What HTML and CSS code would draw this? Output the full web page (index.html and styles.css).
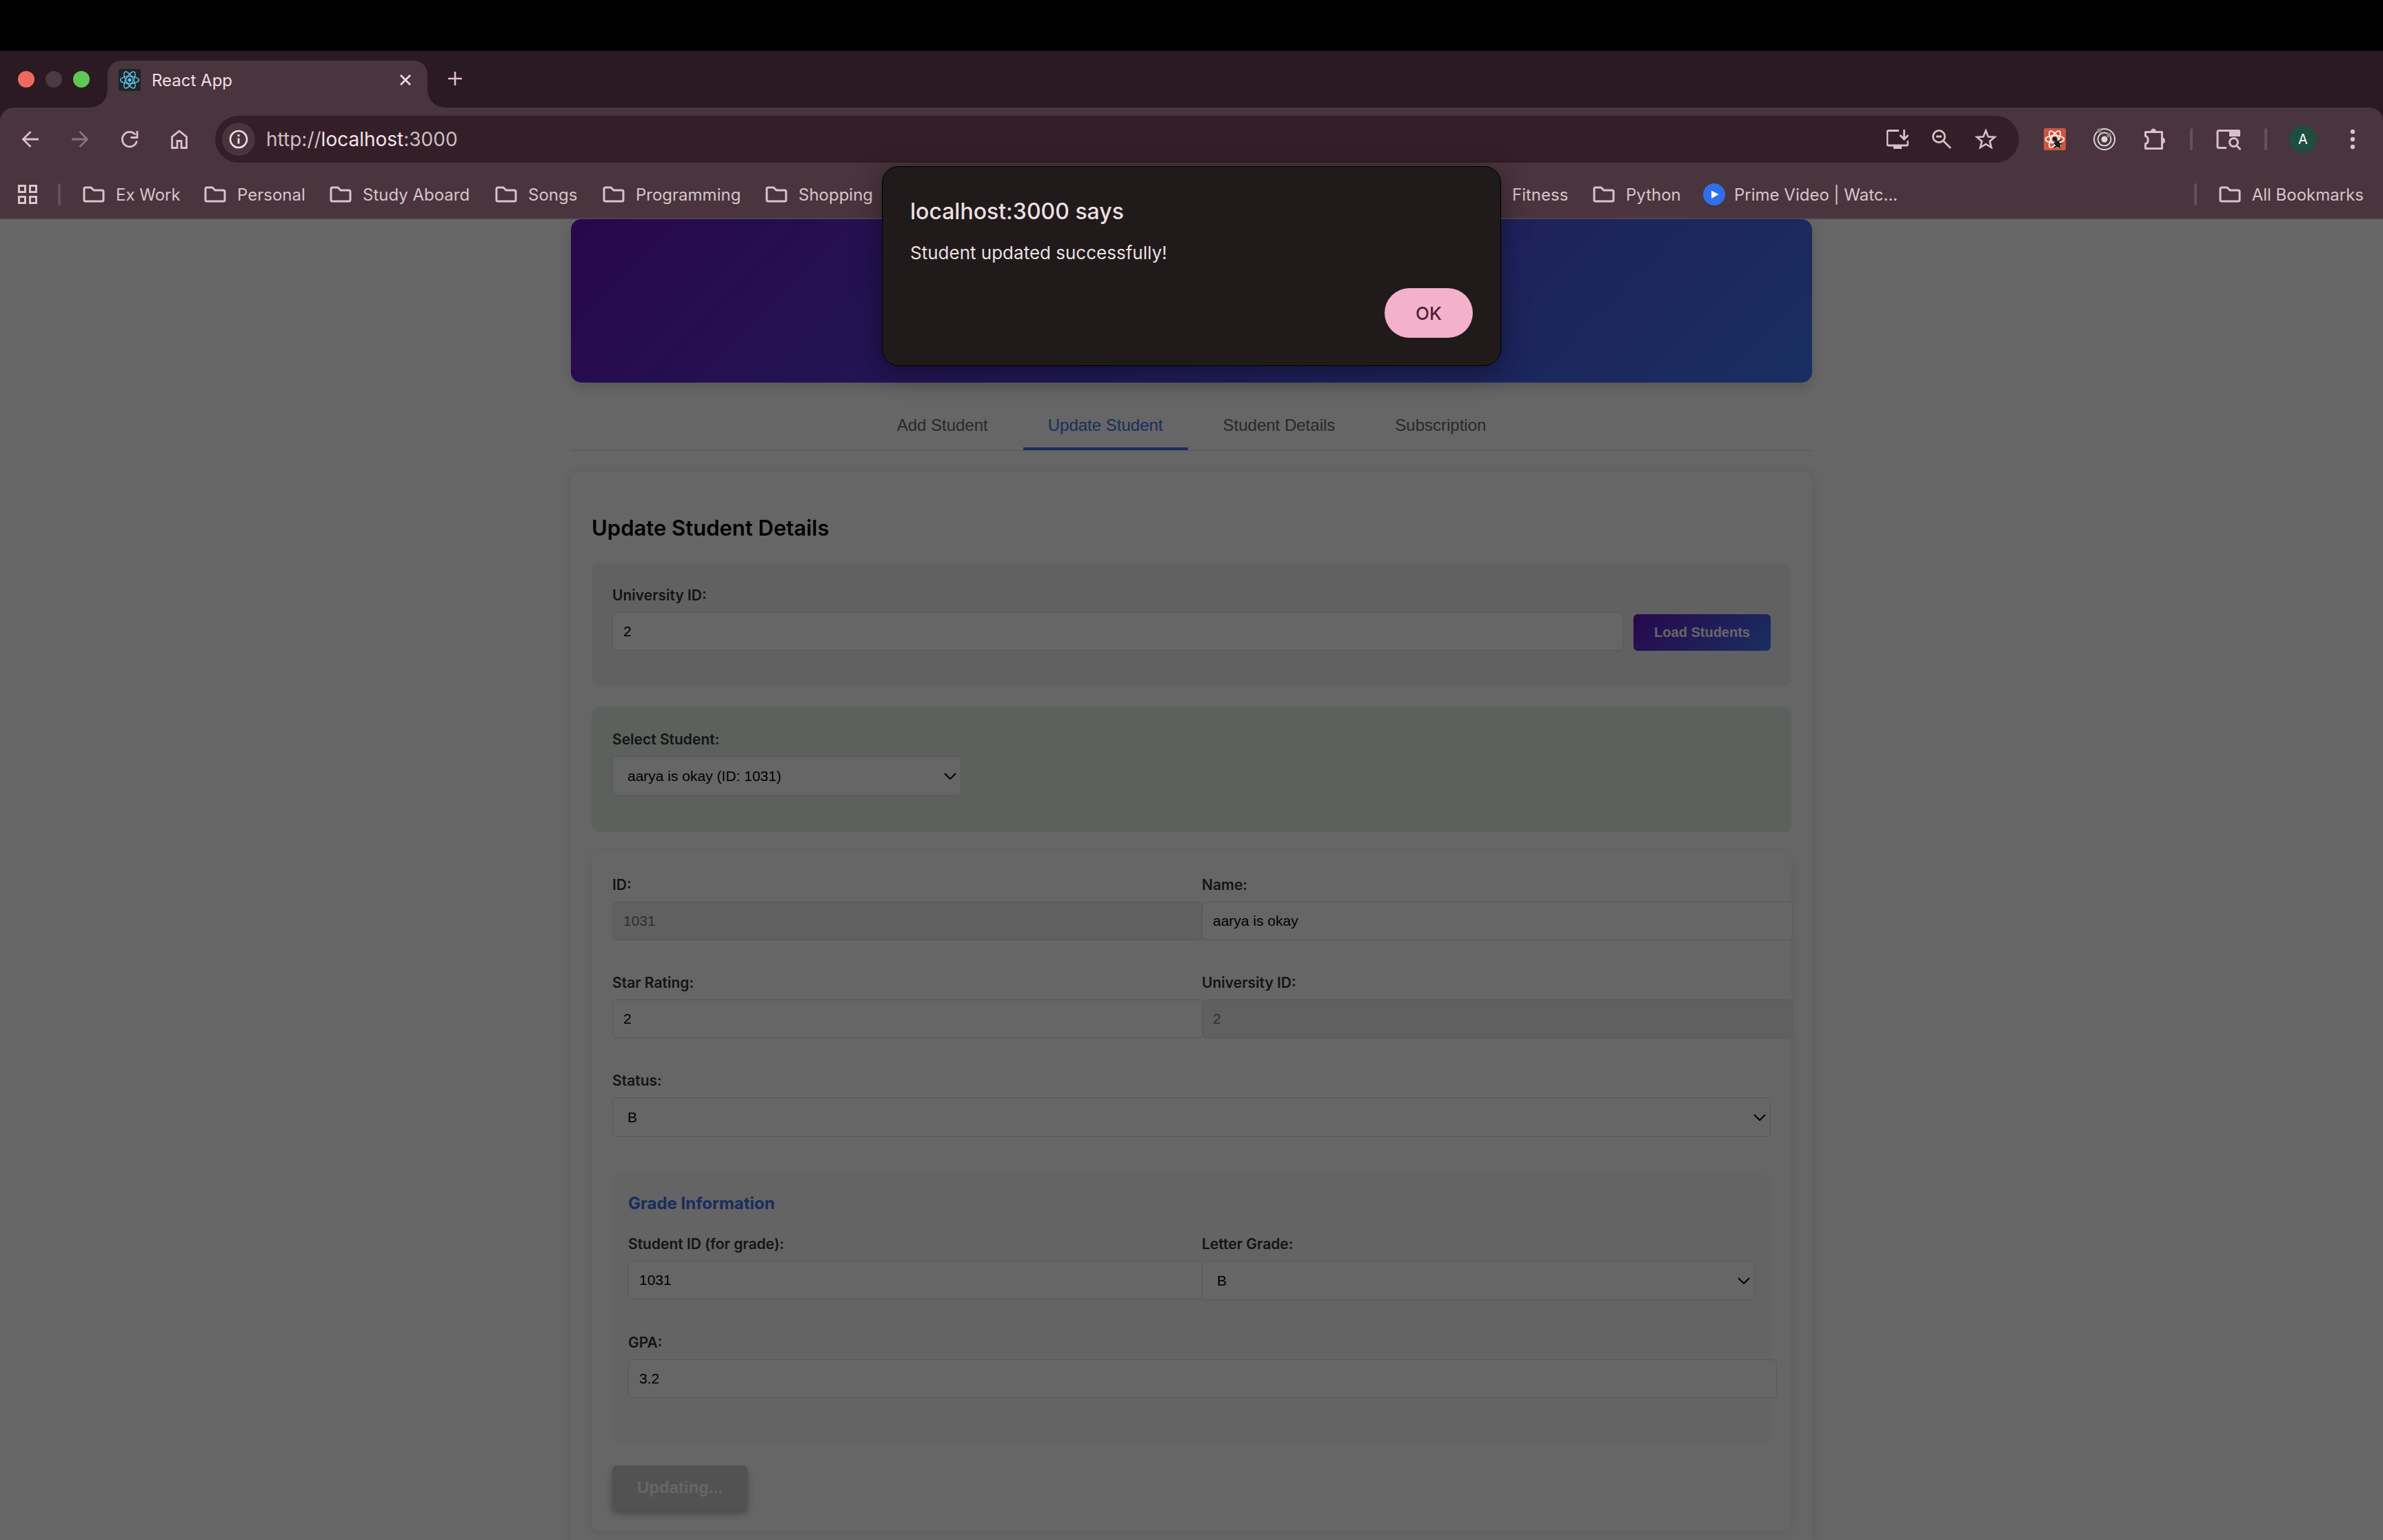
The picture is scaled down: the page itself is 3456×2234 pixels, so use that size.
FILE: index.html
```html
<!DOCTYPE html>
<html lang="en">
<head>
<meta charset="utf-8">
<title>React App</title>
<link rel="stylesheet" href="styles.css">
</head>
<body>
<svg class="defs" aria-hidden="true">
  <symbol id="folder" viewBox="0 0 32 24"><path d="M2 4a2 2 0 0 1 2-2h8l4 4h12a2 2 0 0 1 2 2v12a2 2 0 0 1-2 2H4a2 2 0 0 1-2-2z" fill="none" stroke="currentColor" stroke-width="3"/></symbol>
  <symbol id="chevron" viewBox="0 0 18 10"><path d="M1 1l8 8 8-8" fill="none" stroke="currentColor" stroke-width="2"/></symbol>
</svg>

<header class="chrome">
  <div class="menubar"></div>
  <div class="tabstrip">
    <div class="lights"><i class="light red"></i><i class="light off"></i><i class="light go"></i></div>
    <div class="tab">
      <svg class="favicon" viewBox="0 0 32 32"><rect width="32" height="32" rx="3" fill="#20232a"/><g fill="none" stroke="#61c4e8" stroke-width="1.4"><ellipse cx="16" cy="16" rx="13.500" ry="5.200"/><ellipse cx="16" cy="16" rx="13.500" ry="5.200" transform="rotate(60 16 16)"/><ellipse cx="16" cy="16" rx="13.500" ry="5.200" transform="rotate(120 16 16)"/></g><circle cx="16" cy="16" r="2.600" fill="#61c4e8"/></svg>
      <span class="tab-title">React App</span>
      <button class="tab-close" aria-label="Close tab"><svg viewBox="0 0 16 16"><path d="M1 1l14 14M15 1L1 15" fill="none" stroke="currentColor" stroke-width="2.600"/></svg></button>
    </div>
    <button class="new-tab" aria-label="New tab"><svg viewBox="0 0 20 20"><path d="M10 0v20M0 10h20" fill="none" stroke="currentColor" stroke-width="2.600"/></svg></button>
  </div>

  <div class="toolbar">
    <button class="tool" aria-label="Back"><svg viewBox="0 0 32 32"><path d="M28 16H6M16.500 5L5.500 16l11 11" fill="none" stroke="currentColor" stroke-width="2.800"/></svg></button>
    <button class="tool faded" aria-label="Forward"><svg viewBox="0 0 32 32"><path d="M4 16h22M15.500 5l11 11-11 11" fill="none" stroke="currentColor" stroke-width="2.800"/></svg></button>
    <button class="tool" aria-label="Reload"><svg viewBox="0 0 32 32"><path d="M26.500 18.500A10.700 10.700 0 1 1 24.500 9.500M27 4v9.500h-9.500" fill="none" stroke="currentColor" stroke-width="2.800"/></svg></button>
    <button class="tool" aria-label="Home"><svg viewBox="0 0 32 32"><path d="M5.500 28.500V12.500L16 4l10.500 8.500v16H19V18.500h-6v10z" fill="none" stroke="currentColor" stroke-width="2.800"/></svg></button>

    <div class="omnibox">
      <button class="site-info" aria-label="Site information"><svg viewBox="0 0 28 28"><circle cx="14" cy="14" r="12" fill="none" stroke="currentColor" stroke-width="2.600"/><path d="M14 12.500v8M14 7v3" stroke="currentColor" stroke-width="2.800"/></svg></button>
      <div class="url">http://<b>localhost</b>:3000</div>
      <button class="omni-tool" aria-label="Install app"><svg viewBox="0 0 32 32"><path d="M18 3.500H3a2 2 0 0 0-2 2V23a2 2 0 0 0 2 2h26a2 2 0 0 0 2-2v-5" fill="none" stroke="currentColor" stroke-width="2.800"/><path d="M10 25h12v5H10z" fill="currentColor"/><path d="M25.500 2v13M19.500 10l6 6 6-6" fill="none" stroke="currentColor" stroke-width="2.800"/></svg></button>
      <button class="omni-tool" aria-label="Zoom"><svg viewBox="0 0 32 32"><circle cx="12" cy="12" r="8.600" fill="none" stroke="currentColor" stroke-width="2.800"/><path d="M18 18l11 11M8 12h8" fill="none" stroke="currentColor" stroke-width="2.800"/></svg></button>
      <button class="omni-tool" aria-label="Bookmark this tab"><svg viewBox="0 0 32 32"><path d="M16 3.500l3.500 8.700 9.300.7-7.100 6 2.300 9.100-8-5-8 5 2.300-9.100-7.100-6 9.300-.7z" fill="none" stroke="currentColor" stroke-width="2.600"/></svg></button>
    </div>

    <button class="tool" aria-label="React developer tools"><svg viewBox="0 0 32 32"><rect width="32" height="32" rx="2" fill="#cd5640"/><g fill="none" stroke="#fff" stroke-width="1.600"><ellipse cx="16" cy="16" rx="13.500" ry="5.200"/><ellipse cx="16" cy="16" rx="13.500" ry="5.200" transform="rotate(60 16 16)"/><ellipse cx="16" cy="16" rx="13.500" ry="5.200" transform="rotate(120 16 16)"/></g><g fill="#1d1d1d"><circle cx="16" cy="15.500" r="3"/><ellipse cx="20" cy="23" rx="3.800" ry="5.500" transform="rotate(-30 20 23)"/></g><path d="M14 23l11-6M15 28l11-6M17 17l7 12" stroke="#1d1d1d" stroke-width="1.800"/></svg></button>
    <button class="tool" aria-label="Extension"><svg viewBox="0 0 32 32"><g fill="none" stroke="#dcd6d8" stroke-width="2"><circle cx="16" cy="16" r="15"/><circle cx="16" cy="16" r="9.500"/></g><circle cx="16" cy="16" r="4.500" fill="#dcd6d8"/><circle cx="8.500" cy="3.500" r="3.200" fill="#8b8487"/><circle cx="22.500" cy="10" r="3.200" fill="#8b8487"/></svg></button>
    <button class="tool" aria-label="Extensions"><svg viewBox="0 0 32 32"><path d="M3.500 5.500h24v24h-24v-7c5-1 5-10 0-11z" fill="none" stroke="currentColor" stroke-width="3" stroke-linejoin="round"/><path d="M11 5a4 4.500 0 0 1 8 0zM28 13.500a4 4.500 0 0 1 0 9z" fill="currentColor"/></svg></button>
    <i class="divider"></i>
    <button class="tool" aria-label="Search tabs"><svg class="wide" viewBox="0 0 36 32"><path d="M15 28.500H4a2 2 0 0 1-2-2v-21a2 2 0 0 1 2-2h15" fill="none" stroke="currentColor" stroke-width="3"/><path d="M19 2h14a2 2 0 0 1 2 2v8H19z" fill="currentColor"/><circle cx="25.500" cy="20.500" r="6" fill="none" stroke="currentColor" stroke-width="3"/><path d="M29.500 25l6 6" stroke="currentColor" stroke-width="3"/></svg></button>
    <i class="divider"></i>
    <button class="tool" aria-label="Profile"><span class="avatar">A</span></button>
    <button class="tool" aria-label="Menu"><svg viewBox="0 0 32 32"><g fill="currentColor"><circle cx="16" cy="5" r="3.200"/><circle cx="16" cy="16" r="3.200"/><circle cx="16" cy="27" r="3.200"/></g></svg></button>
  </div>

  <nav class="bookmarks">
    <button class="apps" aria-label="Apps"><svg viewBox="0 0 28 28"><g fill="none" stroke="currentColor" stroke-width="3"><path d="M1.500 1.500h9v9h-9zM17.500 1.500h9v9h-9zM1.500 17.500h9v9h-9zM17.500 17.500h9v9h-9z"/></g></svg></button>
    <i class="rule"></i>
    <a class="mark" href="#"><svg><use href="#folder"/></svg>Ex Work</a>
    <a class="mark" href="#"><svg><use href="#folder"/></svg>Personal</a>
    <a class="mark" href="#"><svg><use href="#folder"/></svg>Study Aboard</a>
    <a class="mark" href="#"><svg><use href="#folder"/></svg>Songs</a>
    <a class="mark" href="#"><svg><use href="#folder"/></svg>Programming</a>
    <a class="mark" href="#"><svg><use href="#folder"/></svg>Shopping</a>
    <a class="mark" href="#">Fitness</a>
    <a class="mark" href="#"><svg><use href="#folder"/></svg>Python</a>
    <a class="mark prime" href="#"><svg viewBox="0 0 32 32"><circle cx="16" cy="16" r="16" fill="#2f6fea"/><path d="M12 10.500l10.500 5.500L12 22z" fill="#fff"/></svg>Prime Video | Watc...</a>
    <i class="rule"></i>
    <a class="mark" href="#"><svg><use href="#folder"/></svg>All Bookmarks</a>
  </nav>
</header>

<div class="viewport">
  <main class="page">
    <div class="banner"></div>
    <nav class="tabs">
      <button class="tab-link">Add Student</button>
      <button class="tab-link active">Update Student</button>
      <button class="tab-link">Student Details</button>
      <button class="tab-link">Subscription</button>
    </nav>

    <section class="panel">
      <h2>Update Student Details</h2>

      <div class="box lookup">
        <div class="group grow"><label for="uni">University ID:</label><input id="uni" value="2"></div>
        <button class="load">Load Students</button>
      </div>

      <div class="box picker">
        <div class="group"><label for="pick">Select Student:</label>
          <div class="select narrow"><select id="pick"><option>aarya is okay (ID: 1031)</option></select><svg><use href="#chevron"/></svg></div></div>
      </div>

      <form class="card">
        <div class="row">
          <div class="group"><label for="sid">ID:</label><input id="sid" value="1031" disabled></div>
          <div class="group"><label for="name">Name:</label><input id="name" value="aarya is okay"></div>
        </div>
        <div class="row">
          <div class="group"><label for="star">Star Rating:</label><input id="star" value="2"></div>
          <div class="group"><label for="uid">University ID:</label><input id="uid" value="2" disabled></div>
        </div>
        <div class="group"><label for="status">Status:</label>
          <div class="select"><select id="status"><option>B</option></select><svg><use href="#chevron"/></svg></div></div>

        <div class="grade">
          <h3>Grade Information</h3>
          <div class="row">
            <div class="group"><label for="gid">Student ID (for grade):</label><input id="gid" value="1031"></div>
            <div class="group"><label for="letter">Letter Grade:</label>
              <div class="select"><select id="letter"><option>B</option></select><svg><use href="#chevron"/></svg></div></div>
          </div>
          <div class="group"><label for="gpa">GPA:</label><input id="gpa" value="3.2"></div>
        </div>
        <button class="submit" type="button" disabled>Updating...</button>
      </form>
    </section>
  </main>
  <div class="scrim"></div>
</div>

<div class="dialog-layer">
  <div class="dialog" role="alertdialog" aria-labelledby="dlg-title">
    <h1 id="dlg-title">localhost:3000 says</h1>
    <p>Student updated successfully!</p>
    <button class="ok">OK</button>
  </div>
</div>
</body>
</html>
```

FILE: styles.css
```css
* { box-sizing: border-box; }
body {
  margin: 0;
  height: 100vh;
  display: flex;
  flex-direction: column;
  position: relative;
  overflow: hidden;
  background: #666;
  font-family: Inter, "Liberation Sans", sans-serif;
}
button { border: 0; padding: 0; margin: 0; background: none; color: inherit; font: inherit; }
a { color: inherit; text-decoration: none; }
.defs { display: none; }

/* browser frame */
.chrome { flex: none; background: #2b1a22; color: #dcbfca; }
.menubar { height: 74px; background: #000; }
.tabstrip { height: 82px; padding: 14px 0 0 26px; display: flex; }
.lights { display: flex; gap: 16px; width: 130px; padding-top: 15px; }
.light { width: 24px; height: 24px; border-radius: 50%; }
.red { background: #ee6a5f; }
.off { background: #4a3b43; }
.go { background: #62c655; }
.tab {
  position: relative;
  width: 464px;
  height: 68px;
  padding: 0 24px 12px 16px;
  display: flex;
  align-items: center;
  border-radius: 20px 20px 0 0;
  background: #4a343d;
}
.tab::before, .tab::after {
  content: "";
  position: absolute;
  bottom: 0;
  width: 24px;
  height: 24px;
}
.tab::before { left: -24px; background: radial-gradient(circle at 0 0, #4a343d00 23px, #4a343d 24px); }
.tab::after { right: -24px; background: radial-gradient(circle at 100% 0, #4a343d00 23px, #4a343d 24px); }
.favicon { width: 32px; height: 32px; }
.tab-title { flex: 1; padding-left: 16px; font-size: 24px; color: #f0dfe4; }
.tab-close { height: 16px; color: #f0dfe4; }
.tab-close svg { display: block; width: 16px; height: 16px; }
.new-tab { align-self: flex-start; margin: 16px 0 0 30px; }
.new-tab svg { display: block; width: 20px; height: 20px; }

.toolbar {
  height: 92px;
  padding: 0 8px;
  display: flex;
  align-items: center;
  background: #4a343d;
  border-radius: 20px 20px 0 0;
}
.tool { width: 72px; height: 68px; display: flex; align-items: center; justify-content: center; }
.tool svg, .omni-tool svg { width: 32px; height: 32px; }
.tool .wide { width: 36px; }
.faded { opacity: 0.45; }
.omnibox {
  flex: 1;
  height: 68px;
  margin: 0 16px;
  padding: 0 16px 0 10px;
  display: flex;
  align-items: center;
  border-radius: 34px;
  background: #341f28;
  color: #d3c3c9;
}
.site-info {
  width: 48px;
  height: 48px;
  display: flex;
  align-items: center;
  justify-content: center;
  border-radius: 50%;
  background: #4a343d;
  color: #f0dfe4;
}
.site-info svg { width: 28px; height: 28px; }
.url { flex: 1; padding-left: 16px; font-size: 28px; color: #cdbdc3; }
.url b { font-weight: 400; color: #f3e3e8; }
.omni-tool { width: 64px; display: flex; justify-content: center; }
.divider { width: 4px; height: 32px; margin: 0 16px; border-radius: 2px; background: #66505a; }
.avatar {
  width: 40px;
  height: 40px;
  border-radius: 50%;
  background: #1f4d40;
  color: #fff;
  font-size: 20px;
  line-height: 40px;
  text-align: center;
}

.bookmarks {
  height: 70px;
  padding: 0 28px 0 26px;
  display: grid;
  grid-template-columns: 58px 36px 176px 182px 240px 156px 236px 1083px 117px 160px 1fr 36px auto;
  align-items: center;
  background: #4a343d;
  border-bottom: 2px solid #51444a;
  color: #d5c5cb;
  font-size: 24px;
}
.apps svg { display: block; width: 28px; height: 28px; }
.rule { width: 4px; height: 32px; border-radius: 2px; background: #66505a; }
.mark { display: flex; align-items: center; gap: 16px; white-space: nowrap; }
.mark svg { flex: none; width: 32px; height: 24px; }
.prime { gap: 13px; }
.prime svg { height: 32px; }

/* web page */
.viewport { flex: 1; position: relative; overflow: hidden; background: #fff; }
.scrim { position: absolute; inset: 0; background: rgba(0, 0, 0, 0.6); }
.page { max-width: 1800px; margin: 0 auto; }
.banner {
  height: 237px;
  border-radius: 15px;
  background: linear-gradient(135deg, #6414c0, #4074f5);
  box-shadow: 0 6px 18px rgba(0, 0, 0, 0.15);
}
.tabs {
  margin-top: 30px;
  display: flex;
  justify-content: center;
  gap: 15px;
  border-bottom: 1px solid #dcdcdc;
}
.tab-link {
  padding: 18px 36px;
  border-bottom: 4px solid transparent;
  font: 24px/28px "Liberation Sans", sans-serif;
  color: #666;
}
.active { color: #3f70ea; border-color: #3f70ea; }
.panel {
  margin-top: 30px;
  padding: 54px 30px 30px;
  border-radius: 15px;
  background: #fff;
  box-shadow: 0 0 18px rgba(0, 0, 0, 0.1);
}
h2 { margin: 0 0 24px; font-size: 31px; line-height: 55px; font-weight: 600; color: #000; }
.box { margin-bottom: 30px; padding: 30px 30px 52px; border-radius: 12px; background: #f3f3f3; }
.picker { padding-bottom: 53px; background: #e7f3e9; }
.lookup { display: flex; align-items: flex-end; gap: 15px; }
.group { display: flex; flex-direction: column; align-items: stretch; min-width: 0; }
.grow { flex: 1; }
label { margin-bottom: 7px; font-size: 21px; line-height: 34px; font-weight: 600; color: #333; }
input, select {
  width: 100%;
  height: 56px;
  margin: 0;
  border: 1px solid #ddd;
  border-radius: 6px;
  background: #fff;
  color: #000;
  font: 21px "Liberation Sans", sans-serif;
}
input { box-sizing: content-box; height: 54px; padding: 0 15px; }
.lookup input { box-sizing: border-box; height: 56px; }
input:disabled { background: #f0f0f0; color: #777; }
.select { position: relative; }
.select select { display: block; height: 57px; padding: 0 21px; appearance: none; }
.select svg { position: absolute; right: 7px; top: 24px; width: 18px; height: 10px; color: #000; }
.narrow { width: 506px; }
.load {
  padding: 15px 30px;
  border-radius: 6px;
  background: linear-gradient(135deg, #6414c0, #4074f5);
  color: #fff;
  font: bold 20px/23px "Liberation Sans", sans-serif;
}
.card {
  padding: 30px;
  border-radius: 12px;
  background: #fff;
  box-shadow: 0 3px 15px rgba(0, 0, 0, 0.1);
}
.row { display: grid; grid-template-columns: 1fr 1fr; gap: 30px; margin-bottom: 45px; }
.grade { margin: 54px 0 31px; padding: 23px 23px 67px; border-radius: 12px; background: #f9f9f9; }
h3 { margin: 0 0 22px; font-size: 24px; line-height: 40px; font-weight: 700; color: #3f70ea; }
.submit {
  padding: 18px 36px;
  border-radius: 6px;
  background: #ccc;
  color: #fff;
  box-shadow: 0 6px 12px rgba(0, 0, 0, 0.3);
  font: bold 24px/28px "Liberation Sans", sans-serif;
}

/* alert */
.dialog-layer { position: absolute; top: 241px; left: 0; right: 0; display: flex; justify-content: center; }
.dialog {
  width: 898px;
  padding: 44px 40px 40px;
  display: flex;
  flex-direction: column;
  border: 1px solid #000;
  border-radius: 24px;
  background: #201a1b;
  color: #eddfe2;
  box-shadow: 0 8px 40px rgba(0, 0, 0, 0.4);
}
.dialog h1 { margin: 0; font-size: 32px; line-height: 42px; font-weight: 500; }
.dialog p { margin: 22px 0 34px; font-size: 26px; line-height: 34px; }
.ok {
  align-self: flex-end;
  width: 128px;
  height: 72px;
  border-radius: 36px;
  background: #f4b1cb;
  color: #4f1f36;
  font-size: 26px;
  font-weight: 500;
}
```
